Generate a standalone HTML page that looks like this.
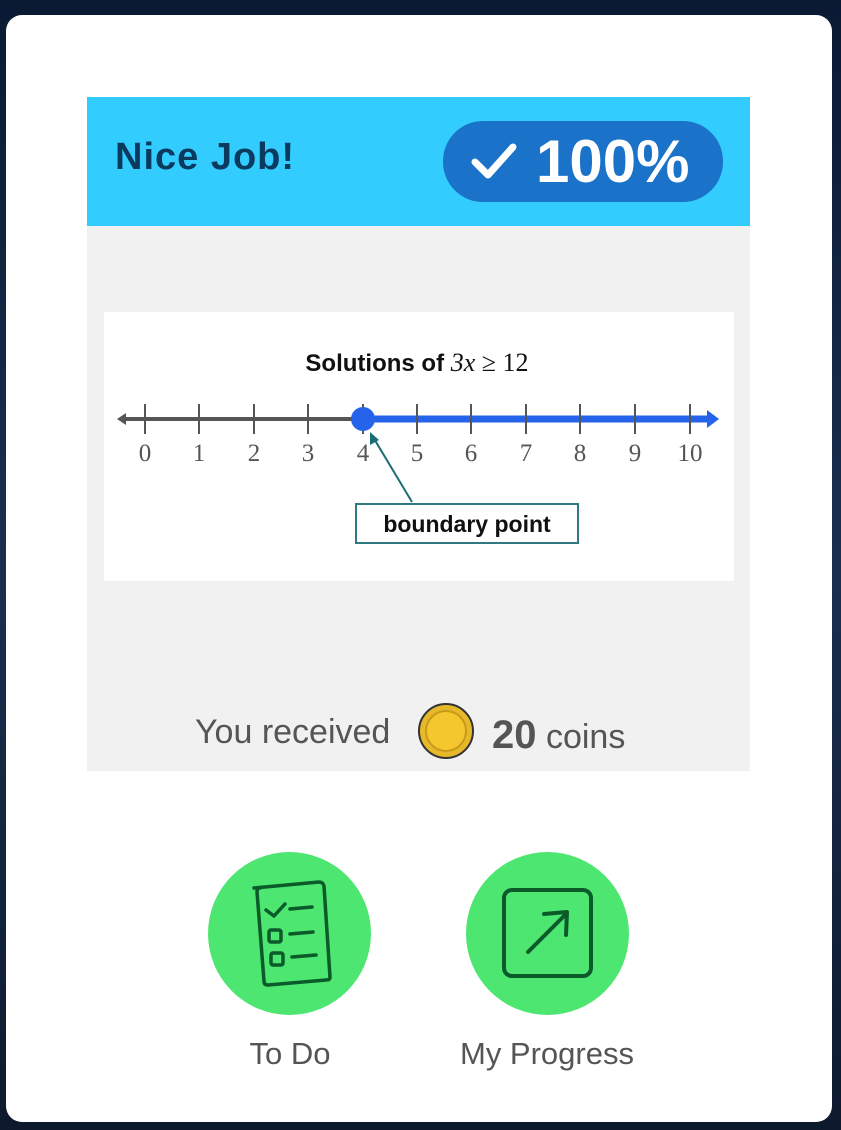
<!DOCTYPE html>
<html><head><style>
body{margin:0;width:841px;height:1130px;background:linear-gradient(180deg,#0a1a33,#1a2f4f 50%,#0d1a2e);overflow:hidden;font-family:"Liberation Sans",sans-serif;position:relative}
.card{position:absolute;left:6px;top:15px;width:826px;height:1107px;background:#fff;border-radius:16px}
.hdr{position:absolute;left:87px;top:97px;width:663px;height:129px;background:#33ccff}
.nice{position:absolute;left:115px;top:136px;font-size:38px;font-weight:bold;color:#0a3a5e;letter-spacing:1px}
.pill{position:absolute;left:443px;top:121px;width:280px;height:81px;border-radius:40px;background:#1a73c8;color:#fff;font-size:60px;font-weight:bold;line-height:81px}
.gray{position:absolute;left:87px;top:226px;width:663px;height:545px;background:#f1f1f1}
.img{position:absolute;left:104px;top:312px;width:630px;height:269px;background:#fff}
.recv{position:absolute;left:0;width:841px;top:710px;font-size:34px;color:#555;height:60px}
.circ{position:absolute;width:163px;height:163px;border-radius:50%;background:#4de670;top:852px}
.lbl{position:absolute;top:1036px;font-size:31px;color:#555;text-align:center;width:300px}
</style></head><body>
<div class="card"></div>
<div class="hdr"></div>
<div class="nice">Nice Job!</div>
<div class="pill"><svg style="position:absolute;left:28px;top:21px" width="46" height="40" viewBox="0 0 46 40"><path d="M4 20 L17 33 L42 5" stroke="#fff" stroke-width="7" fill="none" stroke-linecap="round" stroke-linejoin="round"/></svg><span style="position:absolute;left:93px;top:0">100%</span></div>
<div class="gray"></div>
<div class="img">
<svg width="630" height="269" viewBox="104 312 630 269">
<text x="417" y="371" text-anchor="middle" font-family="Liberation Sans" font-weight="bold" font-size="24" fill="#111">Solutions of <tspan font-family="Liberation Serif" font-weight="normal" font-style="italic" font-size="26">3x</tspan><tspan font-family="Liberation Serif" font-weight="normal" font-size="26"> ≥ 12</tspan></text>
<line x1="122" y1="419" x2="363" y2="419" stroke="#555" stroke-width="4"/>
<path d="M117 419 L126 413 L126 425Z" fill="#555"/>
<line x1="363" y1="419" x2="708" y2="419" stroke="#2563eb" stroke-width="7"/>
<path d="M719 419 L707 410 L707 428Z" fill="#2563eb"/>
<g stroke="#555" stroke-width="2">
<line x1="145" y1="404" x2="145" y2="434"/><line x1="199" y1="404" x2="199" y2="434"/><line x1="254" y1="404" x2="254" y2="434"/><line x1="308" y1="404" x2="308" y2="434"/><line x1="363" y1="404" x2="363" y2="434"/><line x1="417" y1="404" x2="417" y2="434"/><line x1="471" y1="404" x2="471" y2="434"/><line x1="526" y1="404" x2="526" y2="434"/><line x1="580" y1="404" x2="580" y2="434"/><line x1="635" y1="404" x2="635" y2="434"/><line x1="690" y1="404" x2="690" y2="434"/>
</g>
<circle cx="363" cy="419" r="12" fill="#2563eb"/>
<g font-family="Liberation Serif" font-size="25" fill="#555" text-anchor="middle">
<text x="145" y="461">0</text><text x="199" y="461">1</text><text x="254" y="461">2</text><text x="308" y="461">3</text><text x="363" y="461">4</text><text x="417" y="461">5</text><text x="471" y="461">6</text><text x="526" y="461">7</text><text x="580" y="461">8</text><text x="635" y="461">9</text><text x="690" y="461">10</text>
</g>
<line x1="412" y1="502" x2="373" y2="437" stroke="#1a6e73" stroke-width="2"/>
<path d="M370 432 L370 445 L379 440Z" fill="#1a6e73"/>
<rect x="356" y="504" width="222" height="39" fill="#fff" stroke="#2e7a80" stroke-width="2"/>
<text x="467" y="532" text-anchor="middle" font-family="Liberation Sans" font-weight="bold" font-size="23" fill="#111">boundary point</text>
</svg>
</div>
<div class="recv"><span style="position:absolute;left:195px;top:3px">You received</span>
<svg style="position:absolute;left:417px;top:-8px" width="58" height="58" viewBox="0 0 58 58"><circle cx="29" cy="29" r="27" fill="#e5b92a" stroke="#333" stroke-width="2"/><circle cx="29" cy="29" r="20" fill="#f5c72e" stroke="#c99a1a" stroke-width="2"/></svg>
<span style="position:absolute;left:492px;top:3px"><b style="font-size:40px">20</b> coins</span></div>
<div class="circ" style="left:208px">
<svg width="163" height="163" viewBox="0 0 163 163" fill="none" stroke="#0b5a2a" stroke-width="3.5" stroke-linecap="round" stroke-linejoin="round">
<path d="M46 36 L111 30 Q115 30 116 34 L122 125 Q122 128 118 128 L60 133 Q56 133 56 129 L49 40 Q49 36 52 36"/>
<path d="M58 58 L66 64 L77 52"/><path d="M82 57 L104 55"/>
<rect x="61" y="78" width="12" height="12" rx="2"/><path d="M82 82 L105 80"/>
<rect x="63" y="101" width="12" height="12" rx="2"/><path d="M84 105 L108 103"/>
</svg></div>
<div class="circ" style="left:466px">
<svg width="163" height="163" viewBox="0 0 163 163" fill="none" stroke="#0b5a2a" stroke-width="4" stroke-linecap="round" stroke-linejoin="round">
<rect x="38" y="38" width="87" height="86" rx="8"/>
<path d="M62 100 L99 63"/><path d="M78 62 L101 60 L100 83"/>
</svg></div>
<div class="lbl" style="left:140px">To Do</div>
<div class="lbl" style="left:397px">My Progress</div>
</body></html>
